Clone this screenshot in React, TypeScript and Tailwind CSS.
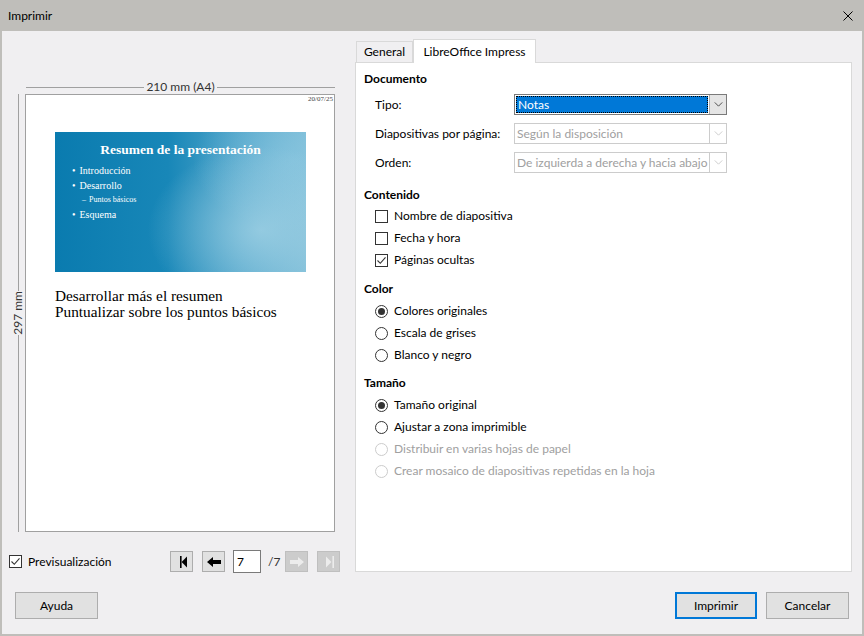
import React from 'react';

function Check({ checked }: { checked?: boolean }) {
  return (
    <span className="w-[13px] h-[13px] shrink-0 border border-[#333333] bg-white flex items-center justify-center">
      {checked && (
        <svg viewBox="0 0 11 11" className="w-[11px] h-[11px]">
          <path d="M1.5 5.5 L4.3 8.3 L9.5 2.3" stroke="#333333" strokeWidth="1.1" fill="none" />
        </svg>
      )}
    </span>
  );
}

function Radio({ checked, disabled }: { checked?: boolean; disabled?: boolean }) {
  return (
    <span
      className={`w-[13px] h-[13px] shrink-0 rounded-full border bg-white flex items-center justify-center ${
        disabled ? 'border-[#cccccc]' : 'border-[#333333]'
      }`}
    >
      {checked && <span className="w-[7px] h-[7px] rounded-full bg-[#333333]" />}
    </span>
  );
}

function Chevron({ color }: { color: string }) {
  return (
    <svg viewBox="0 0 10 6" className="w-[9px] h-[5px]">
      <polyline points="0.5,0.5 5,5 9.5,0.5" stroke={color} strokeWidth="1" fill="none" />
    </svg>
  );
}

function Select({ value, active }: { value: string; active?: boolean }) {
  if (active) {
    return (
      <div className="w-[213px] h-[21px] flex border border-[#7a7a7a] bg-white">
        <div className="flex-1 m-px bg-[#0078d7] outline outline-1 outline-dotted outline-[#000000] -outline-offset-1 flex items-center pl-[2px] text-white">
          {value}
        </div>
        <div className="w-[17px] bg-[#e5e5e5] border-l border-[#adadad] flex items-center justify-center">
          <Chevron color="#333333" />
        </div>
      </div>
    );
  }
  return (
    <div className="w-[213px] h-[21px] flex border border-[#cccccc] bg-white text-[#a0a0a0]">
      <div className="flex-1 flex items-center pl-[2px] whitespace-nowrap overflow-hidden">{value}</div>
      <div className="w-[17px] border-l border-[#cccccc] flex items-center justify-center">
        <Chevron color="#c4c4c4" />
      </div>
    </div>
  );
}

function NavButton({ children, disabled }: { children: React.ReactNode; disabled?: boolean }) {
  return (
    <div
      className={`w-[23px] h-[21px] border flex items-center justify-center ${
        disabled ? 'bg-[#cccccc] border-[#bfbfbf]' : 'bg-[#e1e1e1] border-[#adadad]'
      }`}
    >
      {children}
    </div>
  );
}

function Section({ title, className, children }: { title: string; className?: string; children: React.ReactNode }) {
  return (
    <div className={className}>
      <div className="font-bold h-[16px] leading-[16px]">{title}</div>
      {children}
    </div>
  );
}

function OptionRow({ children, label, disabled }: { children: React.ReactNode; label: string; disabled?: boolean }) {
  return (
    <div className={`h-[22px] flex items-center gap-[6px] pl-[11px] ${disabled ? 'text-[#a0a0a0]' : ''}`}>
      {children}
      <span>{label}</span>
    </div>
  );
}

export default function App() {
  return (
    <div className="w-[864px] h-[636px] flex flex-col bg-[#f0eff1] font-['Lato',sans-serif] text-[12px] leading-[16px] text-black">
      {/* Title bar */}
      <div className="h-[31px] shrink-0 bg-[#bfbeba] flex items-center justify-between pl-[8px] pr-[11px]">
        <span>Imprimir</span>
        <svg viewBox="0 0 10 10" className="w-[10px] h-[10px]">
          <path d="M0.5 0.5 L9.5 9.5 M9.5 0.5 L0.5 9.5" stroke="#000" strokeWidth="1" />
        </svg>
      </div>

      <div className="flex-1 flex flex-col border-x-2 border-b-2 border-[#bfbeba]">
        <div className="flex">
          {/* Preview column */}
          <div className="w-[353px] pt-[49px] flex flex-col">
            <div className="ml-[24px] w-[309px] h-[14px] flex items-center text-[#333333]">
              <div className="flex-1 h-px bg-[#a0a0a0]" />
              <span className="px-[2px]">210 mm (A4)</span>
              <div className="flex-1 h-px bg-[#a0a0a0]" />
            </div>
            <div className="flex h-[438px]">
              <div className="ml-[9px] w-[14px] flex flex-col items-center">
                <div className="flex-1 w-px bg-[#a0a0a0]" />
                <span className="[writing-mode:vertical-rl] rotate-180 py-[2px] text-[#333333]">297 mm</span>
                <div className="flex-1 w-px bg-[#a0a0a0]" />
              </div>
              <div className="w-[310px] border border-[#a0a0a0] bg-white flex flex-col">
                <div className="h-[8px] text-[7px] leading-[8px] text-right pr-[1px] font-['Liberation_Serif',serif] text-[#444444]">
                  20/07/25
                </div>
                <div className="mt-[29px] ml-[29px] w-[251px] h-[140px] bg-[radial-gradient(ellipse_45%_60%_at_82%_70%,rgba(170,215,232,0.7),transparent),radial-gradient(ellipse_40%_50%_at_95%_20%,rgba(140,200,225,0.65),transparent),linear-gradient(90deg,#0a7baf_0%,#1887b8_45%,#52a6cb_75%,#7cbcd7_100%)] font-['Liberation_Serif',serif] text-white">
                  <div className="pt-[10px] text-center text-[13.5px] font-bold leading-[16px]">
                    Resumen de la presentación
                  </div>
                  <div className="mt-[5px] pl-[17px] text-[10px] leading-[15px]">
                    <div className="flex gap-[4px]">
                      <span>•</span>
                      <span>Introducción</span>
                    </div>
                    <div className="flex gap-[4px]">
                      <span>•</span>
                      <span>Desarrollo</span>
                    </div>
                    <div className="flex gap-[3px] pl-[10px] text-[8px] leading-[14px]">
                      <span>–</span>
                      <span>Puntos básicos</span>
                    </div>
                    <div className="flex gap-[4px]">
                      <span>•</span>
                      <span>Esquema</span>
                    </div>
                  </div>
                </div>
                <div className="mt-[16px] ml-[29px] font-['Liberation_Serif',serif] text-[15.3px] leading-[16px]">
                  <div>Desarrollar más el resumen</div>
                  <div>Puntualizar sobre los puntos básicos</div>
                </div>
              </div>
            </div>
            <div className="mt-[18px] h-[23px] flex items-center">
              <div className="ml-[7px]">
                <Check checked />
              </div>
              <span className="ml-[6px]">Previsualización</span>
              <div className="ml-auto mr-[15px] flex items-center">
                <NavButton>
                  <svg viewBox="0 0 8 12" className="w-[8px] h-[12px] ml-[4px]">
                    <rect x="0" y="0" width="1.6" height="12" fill="#000" />
                    <polygon points="1.6,6 7,0.5 7,11.5" fill="#000" />
                  </svg>
                </NavButton>
                <div className="ml-[9px]">
                  <NavButton>
                    <svg viewBox="0 0 14 10" className="w-[14px] h-[10px]">
                      <polygon points="0,5 6,0 6,3 14,3 14,7 6,7 6,10" fill="#000" />
                    </svg>
                  </NavButton>
                </div>
                <div className="ml-[8px] w-[28px] h-[23px] border border-[#7a7a7a] bg-white flex items-center pl-[3px]">
                  7
                </div>
                <span className="ml-[7px] w-[17px] text-[#333333]">/7</span>
                <NavButton disabled>
                  <svg viewBox="0 0 14 10" className="w-[14px] h-[10px]">
                    <polygon points="14,5 8,0 8,3 0,3 0,7 8,7 8,10" fill="#ececec" />
                  </svg>
                </NavButton>
                <div className="ml-[9px]">
                  <NavButton disabled>
                    <svg viewBox="0 0 8 12" className="w-[8px] h-[12px] ml-[2px]">
                      <polygon points="0,0.5 5.4,6 0,11.5" fill="#ececec" />
                      <rect x="6.4" y="0" width="1.6" height="12" fill="#ececec" />
                    </svg>
                  </NavButton>
                </div>
              </div>
            </div>
          </div>

          {/* Options column */}
          <div className="w-[497px] pt-[8px] flex flex-col">
            <div className="h-[24px] flex items-end -mb-px relative z-10">
              <div className="ml-px w-[57px] h-[21px] mb-px border border-b-0 border-[#d9d9d9] bg-[#f0eff1] flex items-center justify-center">
                General
              </div>
              <div className="w-[123px] h-[24px] border border-b-0 border-[#d9d9d9] bg-white flex items-center justify-center">
                LibreOffice Impress
              </div>
            </div>
            <div className="h-[510px] border border-[#d9d9d9] bg-white pl-[8px] pt-[8px]">
              <Section title="Documento">
                <div className="mt-[7px] flex flex-col gap-[8px] pl-[11px]">
                  <div className="flex items-center">
                    <span className="w-[139px]">Tipo:</span>
                    <Select value="Notas" active />
                  </div>
                  <div className="flex items-center">
                    <span className="w-[139px]">Diapositivas por página:</span>
                    <Select value="Según la disposición" />
                  </div>
                  <div className="flex items-center">
                    <span className="w-[139px]">Orden:</span>
                    <Select value="De izquierda a derecha y hacia abajo" />
                  </div>
                </div>
              </Section>

              <Section title="Contenido" className="mt-[14px]">
                <div className="mt-[2px]">
                  <OptionRow label="Nombre de diapositiva">
                    <Check />
                  </OptionRow>
                  <OptionRow label="Fecha y hora">
                    <Check />
                  </OptionRow>
                  <OptionRow label="Páginas ocultas">
                    <Check checked />
                  </OptionRow>
                </div>
              </Section>

              <Section title="Color" className="mt-[10px]">
                <div className="mt-[3px]">
                  <OptionRow label="Colores originales">
                    <Radio checked />
                  </OptionRow>
                  <OptionRow label="Escala de grises">
                    <Radio />
                  </OptionRow>
                  <OptionRow label="Blanco y negro">
                    <Radio />
                  </OptionRow>
                </div>
              </Section>

              <Section title="Tamaño" className="mt-[9px]">
                <div className="mt-[3px]">
                  <OptionRow label="Tamaño original">
                    <Radio checked />
                  </OptionRow>
                  <OptionRow label="Ajustar a zona imprimible">
                    <Radio />
                  </OptionRow>
                  <OptionRow label="Distribuir en varias hojas de papel" disabled>
                    <Radio disabled />
                  </OptionRow>
                  <OptionRow label="Crear mosaico de diapositivas repetidas en la hoja" disabled>
                    <Radio disabled />
                  </OptionRow>
                </div>
              </Section>
            </div>
          </div>
        </div>

        {/* Footer buttons */}
        <div className="flex-1 flex items-start pt-[19px] pl-[13px] pr-[13px]">
          <button className="w-[83px] h-[27px] bg-[#e1e1e1] border border-[#adadad]">Ayuda</button>
          <button className="ml-auto w-[82px] h-[27px] bg-[#e1e1e1] border-2 border-[#0078d7]">Imprimir</button>
          <button className="ml-[9px] w-[83px] h-[27px] bg-[#e1e1e1] border border-[#adadad]">Cancelar</button>
        </div>
      </div>
    </div>
  );
}
